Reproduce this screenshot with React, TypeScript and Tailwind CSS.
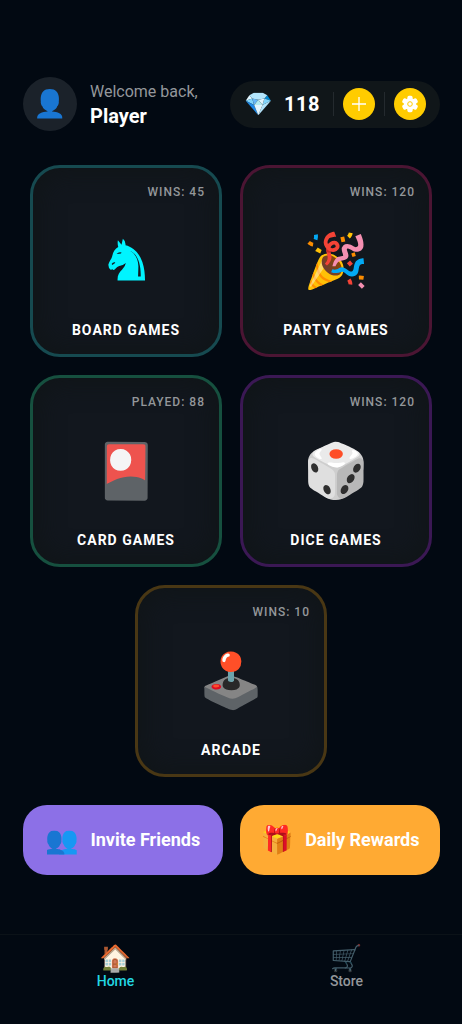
import React from 'react';
import clsx from 'clsx';

interface Game {
  title: string;
  stat: string;
  icon: React.ReactNode;
  border: string;
}

const KnightIcon: React.FC = () => (
  <svg viewBox="50 52 118 132" className="w-[39px] h-[44px] mb-1" fill="#00f4ff" aria-hidden="true">
    <path
      fillRule="evenodd"
      d="M83 58 L94 72 L98 54 Q107 61 106 73 C128 78 147 95 157 124 C163 142 165 160 165 180 L82 180 C81 165 87 156 96 147 Q105 138 107 127 Q98 135 87 136 Q80 138 77 143 Q73 149 68 148 L66 145 L62 148 Q54 143 54 132 C56 123 64 115 66 106 C68 93 75 84 84 79 Q81 68 83 58 Z
         M79 100 Q85 92 94 95 Q94 99 87 99 Z
         M64 130 Q68 123 75 125 Q75 129 70 130 L67 133 Z
         M120 91 C136 99 144 115 145 137 L144 168 L152 168 C153 132 143 99 120 91 Z"
    />
  </svg>
);

const GearIcon: React.FC = () => (
  <svg viewBox="0 0 18 18" className="w-[18px] h-[18px]" aria-hidden="true">
    <g fill="#fff">
      <circle cx="9" cy="9" r="6" />
      {[0, 60, 120].map((angle) => (
        <rect key={angle} x="6.4" y="0.8" width="5.2" height="16.4" rx="1.6" transform={`rotate(${angle} 9 9)`} />
      ))}
    </g>
    <circle cx="9" cy="9" r="2.3" fill="none" stroke="#ffcc00" strokeWidth="1" />
  </svg>
);

const PlusIcon: React.FC = () => (
  <svg viewBox="0 0 16 16" className="w-4 h-4" stroke="#fff" strokeWidth="1.3" aria-hidden="true">
    <path d="M8 1v14M1 8h14" />
  </svg>
);

const games: Game[] = [
  { title: 'BOARD GAMES', stat: 'WINS: 45', icon: <KnightIcon />, border: 'border-[#164a50]' },
  { title: 'PARTY GAMES', stat: 'WINS: 120', icon: '🎉', border: 'border-[#4b1533]' },
  { title: 'CARD GAMES', stat: 'PLAYED: 88', icon: '🎴', border: 'border-[#16503f]' },
  { title: 'DICE GAMES', stat: 'WINS: 120', icon: '🎲', border: 'border-[#3b1854]' },
  { title: 'ARCADE', stat: 'WINS: 10', icon: '🕹️', border: 'border-[#493714]' },
];

const GameCard: React.FC<{ game: Game }> = ({ game }) => (
  <button
    type="button"
    className={clsx(
      'w-[calc(50%-9px)] aspect-square flex flex-col items-center rounded-[30px] border-[3px] pt-4 pb-[14px] bg-[#12171e] shadow-[inset_0_0_24px_6px_#101518]',
      game.border
    )}
  >
    <span className="self-end pr-[14px] text-[12px] leading-4 font-medium tracking-[1px] text-[#94979a]">
      {game.stat}
    </span>
    <span className="flex-1 flex items-center justify-center pt-[3px] text-[53px] leading-none">{game.icon}</span>
    <span className="text-sm leading-5 font-bold tracking-[1px] text-white">{game.title}</span>
  </button>
);

const Header: React.FC = () => (
  <header className="flex items-center justify-between pl-[23px] pr-[22px] pt-[77px]">
    <div className="flex items-center gap-[13px]">
      <div className="w-[54px] h-[54px] rounded-full bg-[#1b222a] flex items-center justify-center text-[27px] leading-none">
        👤
      </div>
      <div className="pb-px">
        <p className="text-base leading-6 text-[#94979b]">Welcome back,</p>
        <h1 className="text-xl leading-6 font-bold text-white">Player</h1>
      </div>
    </div>
    <div className="flex items-center h-[47px] px-[14px] rounded-full bg-[#101619]">
      <span className="text-[23px] leading-none">💎</span>
      <span className="ml-[11px] text-xl leading-6 font-bold tracking-wide text-white">118</span>
      <span className="ml-[13px] w-px h-6 bg-[#242a2e]" />
      <button type="button" aria-label="Add gems" className="mx-[9px] w-8 h-8 rounded-full bg-[#ffcc00] flex items-center justify-center">
        <PlusIcon />
      </button>
      <span className="w-px h-6 bg-[#242a2e]" />
      <button type="button" aria-label="Settings" className="ml-[9px] w-8 h-8 rounded-full bg-[#ffcc00] flex items-center justify-center">
        <GearIcon />
      </button>
    </div>
  </header>
);

const App: React.FC = () => {
  return (
    <div className="min-h-screen flex flex-col bg-[#020912] font-[Roboto,'Noto_Color_Emoji',sans-serif]">
      <Header />

      <main className="pt-[34px]">
        <div className="flex flex-wrap justify-center gap-[18px] px-[30px]">
          {games.map((game) => (
            <GameCard key={game.title} game={game} />
          ))}
        </div>

        <div className="grid grid-cols-2 gap-[17px] pl-[23px] pr-[22px] pt-7">
          <button type="button" className="h-[70px] rounded-[24px] bg-[#8c70e7] flex items-center justify-center gap-[11px] text-white">
            <span className="text-[27px] leading-none">👥</span>
            <span className="text-lg leading-6 font-bold">Invite Friends</span>
          </button>
          <button type="button" className="h-[70px] rounded-[24px] bg-[#ffaa33] flex items-center justify-center gap-[11px] text-white">
            <span className="text-[27px] leading-none">🎁</span>
            <span className="text-lg leading-6 font-bold">Daily Rewards</span>
          </button>
        </div>
      </main>

      <nav className="mt-auto h-[90px] grid grid-cols-2 border-t border-[#0b1218] pt-[10px]">
        <a href="#home" className="flex flex-col items-center text-[#22d8e4]">
          <span className="text-[26px] leading-[26px]">🏠</span>
          <span className="text-sm leading-5 font-medium">Home</span>
        </a>
        <a href="#store" className="flex flex-col items-center text-[#94979b]">
          <span className="text-[26px] leading-[26px] opacity-50">🛒</span>
          <span className="text-sm leading-5 font-medium">Store</span>
        </a>
      </nav>
    </div>
  );
};

export default App;
